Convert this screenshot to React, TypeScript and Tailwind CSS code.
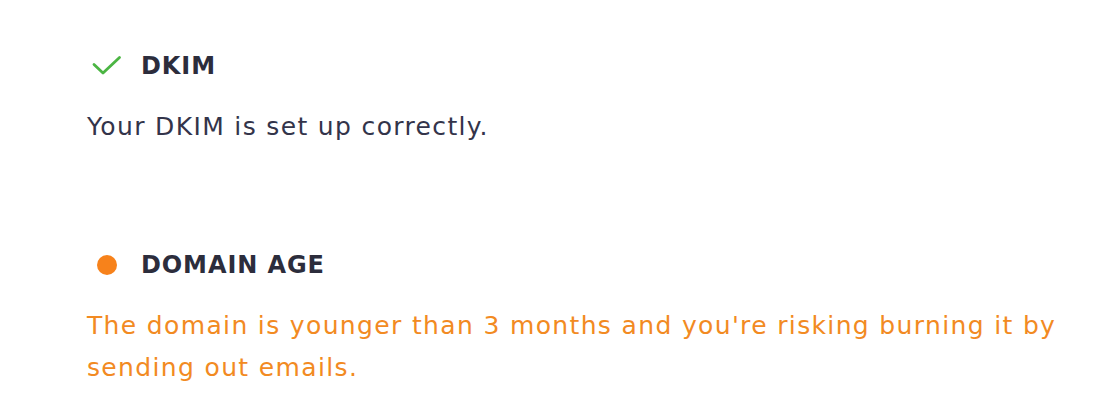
type Status = "ok" | "warn";

const checks: { title: string; status: Status; message: string }[] = [
  { title: "DKIM", status: "ok", message: "Your DKIM is set up correctly." },
  {
    title: "DOMAIN AGE",
    status: "warn",
    message:
      "The domain is younger than 3 months and you're risking burning it by sending out emails.",
  },
];

const StatusIcon = ({ status }: { status: Status }) =>
  status === "ok" ? (
    <svg width="30" height="22" viewBox="0 0 30 22" fill="none">
      <path
        d="M2 9.5 L11 18 L27.5 2.5"
        stroke="#4bb543"
        strokeWidth="2.8"
        strokeLinecap="round"
        strokeLinejoin="round"
      />
    </svg>
  ) : (
    <span className="block w-[20px] h-[20px] rounded-full bg-[#f7821b]" />
  );

const App = () => {
  return (
    <div
      className="min-h-screen bg-white pl-[87px] pr-[30px] pt-[46px] flex flex-col gap-[97px]"
      style={{ fontFamily: '"DejaVu Sans", sans-serif' }}
    >
      {checks.map((c) => (
        <div key={c.title} className="flex flex-col gap-[20px]">
          <div className="flex items-center h-[40px]">
            <div className="w-[40px] flex justify-center">
              <StatusIcon status={c.status} />
            </div>
            <h3 className="ml-[14px] text-[24px] font-bold tracking-[0.9px] text-[#2c2d3c]">
              {c.title}
            </h3>
          </div>
          <p
            className={`text-[25px] leading-[42px] tracking-[1.35px] max-w-[1000px] ${
              c.status === "ok" ? "text-[#33344a]" : "text-[#f28a22]"
            }`}
          >
            {c.message}
          </p>
        </div>
      ))}
    </div>
  );
};

export default App;
